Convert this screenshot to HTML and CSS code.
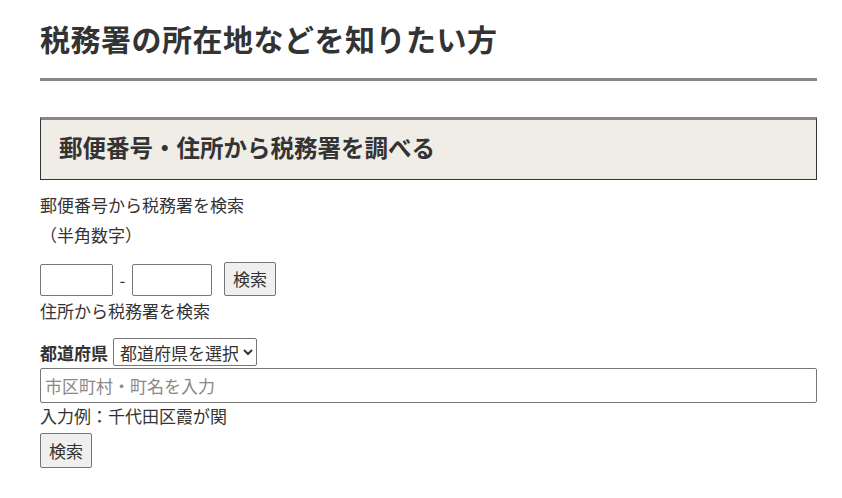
FILE: index.html
```html
<!DOCTYPE html>
<html lang="ja">
<head>
    <meta charset="UTF-8">
    <title>税務署の所在地などを知りたい方</title>
    <link rel="stylesheet" href="styles.css">
</head>
<body>
    <div class="page">
        <h1 class="page-title">税務署の所在地などを知りたい方</h1>

        <h2 class="section-title">郵便番号・住所から税務署を調べる</h2>

        <div class="zip-search">
            <p class="label">郵便番号から税務署を検索</p>
            <p class="note">（半角数字）</p>
            <div class="zip-row">
                <input type="text" class="zip1">
                <span class="dash">-</span>
                <input type="text" class="zip2">
                <button class="btn">検索</button>
            </div>
        </div>

        <div class="addr-search">
            <p class="label">住所から税務署を検索</p>
            <div class="pref-row">
                <span class="pref-label">都道府県</span>
                <select class="pref">
                    <option>都道府県を選択</option>
                </select>
            </div>
            <input type="text" class="city" placeholder="市区町村・町名を入力">
            <p class="example">入力例：千代田区霞が関</p>
            <button class="btn">検索</button>
        </div>
    </div>
</body>
</html>
```

FILE: styles.css
```css
body {
    margin: 0;
    font-family: 'Noto Sans CJK JP', 'Noto Sans', sans-serif;
    color: #333;
    background: #fff;
    font-size: 17px;
}

.page {
    width: 777px;
    margin-left: 40px;
}

.page-title {
    margin: 0;
    padding-top: 18px;
    padding-bottom: 20px;
    font-size: 30px;
    line-height: 40px;
    font-weight: bold;
    letter-spacing: 0.5px;
    border-bottom: 3px solid #888;
}

.section-title {
    margin: 36px 0 0;
    padding: 0 18px 5px;
    height: 54px;
    line-height: 54px;
    font-size: 23.5px;
    font-weight: bold;
    background: #f0ece6;
    border: 1px solid #333;
    border-top: 3px solid #888;
}

p {
    margin: 0;
}

.zip-search .label {
    margin-top: 10px;
    line-height: 30px;
}

.note {
    line-height: 30px;
}

.zip-row {
    display: flex;
    align-items: center;
    margin-top: 12px;
    height: 34px;
}

input {
    box-sizing: border-box;
    font-family: inherit;
    font-size: 17px;
    border: 1px solid #767676;
    border-radius: 2px;
    margin: 0;
}

.zip1 {
    width: 73px;
    height: 32px;
    margin-top: 2px;
}

.zip2 {
    width: 80px;
    height: 32px;
    margin-top: 2px;
}

.dash {
    width: 19px;
    text-align: center;
}

.btn {
    font-family: inherit;
    font-size: 17px;
    color: #333;
    background: #efefef;
    border: 1px solid #767676;
    border-radius: 2px;
    padding: 0 8px;
    height: 34px;
    line-height: 32px;
}

.zip-row .btn {
    margin-left: 12px;
}

.addr-search .label {
    line-height: 30px;
}

.pref-row {
    display: flex;
    align-items: center;
    margin-top: 12px;
}

.pref-label {
    font-weight: bold;
    margin-right: 5px;
}

.pref {
    font-family: inherit;
    font-size: 17px;
    color: #333;
    height: 28px;
    width: 144px;
    padding: 0 2px;
    border: 1px solid #767676;
    border-radius: 2px;
    background: #fff;
}

.city {
    display: block;
    width: 777px;
    height: 35px;
    margin-top: 2px;
    padding: 0 4px;
}

.city::placeholder {
    color: #888;
}

.example {
    line-height: 26px;
}

.addr-search .btn {
    margin-top: 4px;
    height: 35px;
}
```
